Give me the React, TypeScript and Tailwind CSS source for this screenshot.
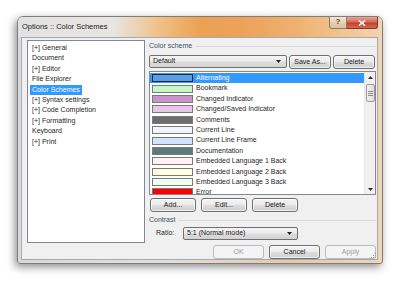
import React from "react";

interface SchemeItem {
  name: string;
  color: string;
}

const treeItems = [
  "[+] General",
  "Document",
  "[+] Editor",
  "File Explorer",
  "Color Schemes",
  "[+] Syntax settings",
  "[+] Code Completion",
  "[+] Formatting",
  "Keyboard",
  "[+] Print",
];

const schemeItems: SchemeItem[] = [
  { name: "Alternating", color: "#5b9de6" },
  { name: "Bookmark", color: "#c8f8c8" },
  { name: "Changed Indicator", color: "#c896c8" },
  { name: "Changed/Saved Indicator", color: "#e6c8e6" },
  { name: "Comments", color: "#6e6e6e" },
  { name: "Current Line", color: "#eef5ff" },
  { name: "Current Line Frame", color: "#cfe5ff" },
  { name: "Documentation", color: "#5c7a80" },
  { name: "Embedded Language 1 Back", color: "#fff2f2" },
  { name: "Embedded Language 2 Back", color: "#fdfde2" },
  { name: "Embedded Language 3 Back", color: "#effff0" },
  { name: "Error", color: "#ff0000" },
];

const Button: React.FC<{ label: string; width: string; disabled?: boolean }> = ({
  label,
  width,
  disabled = false,
}) => (
  <div
    className={`${width} h-[14px] flex items-center justify-center rounded-[3px] border ${
      disabled
        ? "border-[#b8bcc0] bg-[#f4f4f4] text-[#a0a0a0]"
        : "border-[#707070] bg-[linear-gradient(180deg,#f4f4f4_0%,#ebebeb_48%,#dddddd_52%,#d0d0d0_100%)] text-[#1a1a1a] shadow-[inset_0_0_0_1px_rgba(255,255,255,0.7)]"
    }`}
  >
    {label}
  </div>
);

const Dropdown: React.FC<{ label: string; width: string }> = ({ label, width }) => (
  <div
    className={`${width} h-[13px] flex items-center justify-between rounded-[2px] border border-[#707070] bg-[linear-gradient(180deg,#f4f4f4_0%,#ebebeb_48%,#dddddd_52%,#d3d3d3_100%)] pl-[3px] pr-[5px] text-[#1a1a1a]`}
  >
    <span>{label}</span>
    <svg width="5" height="3" viewBox="0 0 5 3">
      <path d="M0 0 L5 0 L2.5 3 Z" fill="#222" />
    </svg>
  </div>
);

const GroupHeader: React.FC<{ label: string; height: string }> = ({ label, height }) => (
  <div className={`${height} flex items-center gap-[4px]`}>
    <span className="text-[#3e5064]">{label}</span>
    <div className="flex-1 h-px bg-[#d5dce3]" />
  </div>
);

export default function App() {
  return (
    <div className="w-[400px] h-[284px] bg-white pl-[17px] pt-[16px] font-['Liberation_Sans',Arial,sans-serif] text-[7px] leading-[10.4px] overflow-hidden">
      <div className="w-[366px] h-[248px] flex flex-col rounded-t-[6px] rounded-b-[3px] border border-[#7d7d7d] bg-[linear-gradient(90deg,#d9d9d9_0%,#e0e0e0_40%,#edc79c_75%,#f0d6b8_100%)] shadow-[-2px_3px_8px_rgba(0,0,0,0.45)]">
        {/* title bar */}
        <div className="h-[20px] flex items-start justify-between rounded-t-[5px] bg-[linear-gradient(90deg,#e2e2e2_0%,#e8e6e3_26%,#efc38c_38%,#eba152_50%,#eda25a_62%,#efb070_76%,#f2c38f_88%,#f4d3b0_100%)]">
          <span className="pl-[4px] pt-[5px] text-[7.5px] leading-[10px] text-[#1c1c1c]">
            Options :: Color Schemes
          </span>
          <div className="flex mr-[4px]">
            <div className="w-[18px] h-[12px] flex items-center justify-center rounded-bl-[3px] border border-t-0 border-[#8a7a6a] bg-[linear-gradient(180deg,#f6e6d4_0%,#e8cfb2_50%,#dcbf9c_100%)] text-[8px] font-bold text-[#4a4a4a]">
              ?
            </div>
            <div className="w-[31px] h-[12px] flex items-center justify-center rounded-br-[3px] border border-t-0 border-l-0 border-[#7a3a30] bg-[linear-gradient(180deg,#e8a593_0%,#d46b58_45%,#c4402c_55%,#d36b50_100%)]">
              <svg width="8" height="6" viewBox="0 0 8 6">
                <path d="M1 0.5 L7 5.5 M7 0.5 L1 5.5" stroke="#fff" strokeWidth="1.6" />
              </svg>
            </div>
          </div>
        </div>

        {/* client area */}
        <div className="ml-[3px] mr-[4px] mb-[3px] flex-1 flex flex-col bg-[#f0f0f0] border border-[#a3a9b0] pl-[5px] pt-[2px]">
          <div className="h-[203px] flex gap-[4px]">
            {/* tree */}
            <div className="w-[118px] h-full bg-white border border-[#828790] pt-[2px] pl-[2px]">
              {treeItems.map((t) => (
                <div key={t} className="h-[10.4px] flex items-center">
                  {t === "Color Schemes" ? (
                    <span className="bg-[#3399ff] text-white px-[2px]">{t}</span>
                  ) : (
                    <span className="px-[2px] text-[#262626]">{t}</span>
                  )}
                </div>
              ))}
            </div>

            {/* right panel */}
            <div className="w-[228px] flex flex-col pr-[1px]">
              <GroupHeader label="Color scheme" height="h-[13px]" />
              <div className="mt-[2px] flex gap-[2px]">
                <Dropdown label="Default" width="w-[138px]" />
                <Button label="Save As..." width="w-[42px]" />
                <Button label="Delete" width="w-[42px]" />
              </div>
              <div className="mt-[2px] h-[124px] flex bg-white border border-[#828790] overflow-hidden">
                <div className="flex-1 overflow-hidden pt-[1px]">
                  {schemeItems.map((s, i) => (
                    <div
                      key={s.name}
                      className={`h-[10.4px] flex items-center gap-[3px] pl-[2px] ${
                        i === 0 ? "bg-[#3399ff] text-white" : "text-[#262626]"
                      }`}
                    >
                      <div
                        className={`w-[41px] h-[8px] shrink-0 border ${
                          i === 0 ? "border-[#1d2a3a]" : "border-[#7a7a7a]"
                        }`}
                        style={{ backgroundColor: s.color }}
                      />
                      <span className="whitespace-nowrap">{s.name}</span>
                    </div>
                  ))}
                </div>
                {/* scrollbar */}
                <div className="w-[11px] h-full flex flex-col items-center bg-[#f0f0f0] border-l border-[#e6e6e6]">
                  <div className="h-[10px] flex items-center justify-center">
                    <svg width="5" height="3" viewBox="0 0 5 3">
                      <path d="M0 3 L5 3 L2.5 0 Z" fill="#333" />
                    </svg>
                  </div>
                  <div className="mt-[2px] w-[9px] h-[18px] flex flex-col items-center justify-center gap-[1px] rounded-[2px] border border-[#9a9a9a] bg-[linear-gradient(90deg,#f2f2f2,#dcdcdc)]">
                    <div className="w-[5px] h-px bg-[#8a8a8a]" />
                    <div className="w-[5px] h-px bg-[#8a8a8a]" />
                    <div className="w-[5px] h-px bg-[#8a8a8a]" />
                  </div>
                  <div className="flex-1" />
                  <div className="h-[10px] flex items-center justify-center">
                    <svg width="5" height="3" viewBox="0 0 5 3">
                      <path d="M0 0 L5 0 L2.5 3 Z" fill="#333" />
                    </svg>
                  </div>
                </div>
              </div>
              <div className="mt-[3px] pl-[1px] flex gap-[5px]">
                <Button label="Add..." width="w-[46px]" />
                <Button label="Edit..." width="w-[46px]" />
                <Button label="Delete" width="w-[46px]" />
              </div>
              <div className="mt-[2px]">
                <GroupHeader label="Contrast" height="h-[12px]" />
              </div>
              <div className="mt-[1px] flex items-center">
                <span className="w-[34px] pl-[7px] text-[#262626]">Ratio:</span>
                <Dropdown label="5:1 (Normal mode)" width="w-[115px]" />
              </div>
            </div>
          </div>

          {/* dialog buttons */}
          <div className="mt-[2px] flex justify-end gap-[5px] pr-[1px]">
            <Button label="OK" width="w-[51px]" disabled />
            <Button label="Cancel" width="w-[51px]" />
            <Button label="Apply" width="w-[51px]" disabled />
          </div>
          <div className="relative flex-1">
            <svg className="absolute right-0 bottom-0" width="7" height="7" viewBox="0 0 7 7">
              <rect x="5" y="1" width="1" height="1" fill="#9a9a9a" />
              <rect x="3" y="3" width="1" height="1" fill="#9a9a9a" />
              <rect x="5" y="3" width="1" height="1" fill="#9a9a9a" />
              <rect x="1" y="5" width="1" height="1" fill="#9a9a9a" />
              <rect x="3" y="5" width="1" height="1" fill="#9a9a9a" />
              <rect x="5" y="5" width="1" height="1" fill="#9a9a9a" />
            </svg>
          </div>
        </div>
      </div>
    </div>
  );
}
